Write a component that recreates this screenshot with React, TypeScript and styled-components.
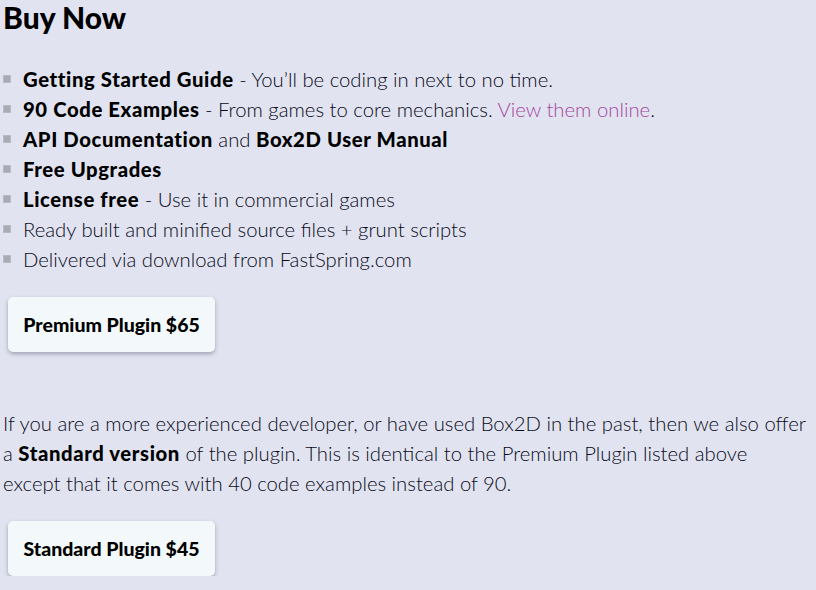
import styled, { createGlobalStyle } from 'styled-components';

const GlobalStyle = createGlobalStyle`
  html, body {
    margin: 0;
    padding: 0;
    background: #e1e4f0;
  }
  body {
    font-family: Lato, "Open Sans", sans-serif;
    color: #0a0a1a;
  }
`;

export default function App() {
  return (
    <Page>
      <GlobalStyle />
      <Title>Buy Now</Title>
      <FeatureList>
        <FeatureItem>
          <b>Getting Started Guide</b> - You’ll be coding in next to no time.
        </FeatureItem>
        <FeatureItem>
          <b>90 Code Examples</b> - From games to core mechanics. <Link href="#">View them online</Link>.
        </FeatureItem>
        <FeatureItem>
          <b>API Documentation</b> and <b>Box2D User Manual</b>
        </FeatureItem>
        <FeatureItem>
          <b>Free Upgrades</b>
        </FeatureItem>
        <FeatureItem>
          <b>License free</b> - Use it in commercial games
        </FeatureItem>
        <FeatureItem>Ready built and minified source files + grunt scripts</FeatureItem>
        <FeatureItem>Delivered via download from FastSpring.com</FeatureItem>
      </FeatureList>
      <BuyButton>Premium Plugin $65</BuyButton>
      <Text>
        If you are a more experienced developer, or have used Box2D in the past, then we also offer
        a <b>Standard version</b> of the plugin. This is identical to the Premium Plugin listed above
        except that it comes with 40 code examples instead of 90.
      </Text>
      <BuyButton>Standard Plugin $45</BuyButton>
    </Page>
  );
}

const Page = styled.div`
  padding: 0 3px;
  width: 810px;
`;

const Title = styled.h2`
  margin: 0;
  padding-top: 1px;
  font-size: 30px;
  line-height: 32px;
  font-weight: 900;
  color: #000;
`;

const FeatureList = styled.ul`
  list-style: none;
  margin: 31px 0 0;
  padding: 0;
`;

const FeatureItem = styled.li`
  position: relative;
  padding-left: 20px;
  font-size: 20.3px;
  line-height: 30px;
  font-weight: 300;

  b {
    font-weight: 900;
    letter-spacing: 0.6px;
    color: #000;
  }

  &::before {
    content: '';
    position: absolute;
    left: 0;
    top: 11px;
    width: 8px;
    height: 8px;
    background: #a9aab3;
    border: 1px solid #b8bac4;
    box-sizing: border-box;
  }
`;

const Link = styled.a`
  color: #a4489f;
  text-decoration: none;
`;

const BuyButton = styled.button`
  display: block;
  margin: 23px 0 0 5px;
  width: 207px;
  height: 55px;
  background: #f3f9fa;
  border: none;
  border-radius: 5px;
  box-shadow: 0 2px 4px rgba(60, 60, 90, 0.4);
  font-family: Lato, sans-serif;
  font-weight: 900;
  font-size: 19.5px;
  color: #000;
  cursor: pointer;
`;

const Text = styled.p`
  margin: 56px 0 0;
  max-width: 805px;
  font-size: 20.3px;
  line-height: 30px;
  font-weight: 300;

  b {
    font-weight: 900;
    letter-spacing: 0.6px;
    color: #000;
  }
`;
